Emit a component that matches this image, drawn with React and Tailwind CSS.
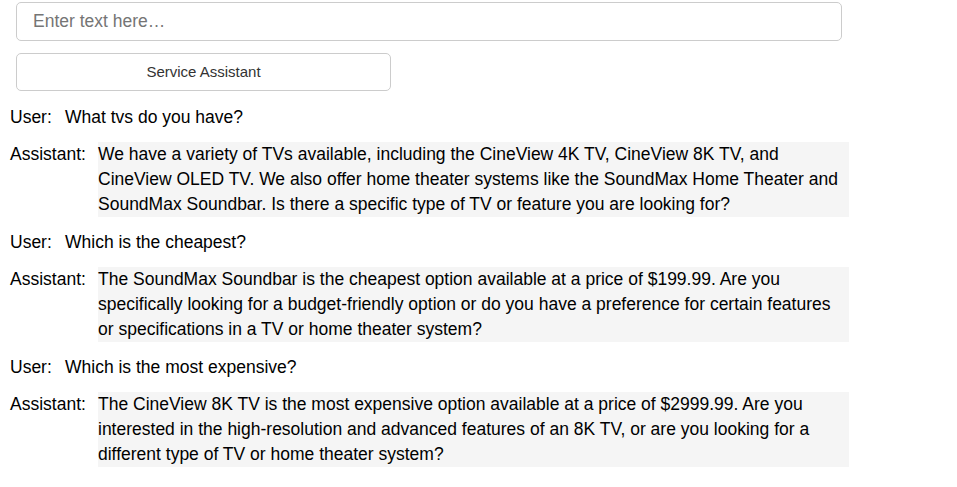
const messages = [
  { role: 'User', text: 'What tvs do you have?' },
  {
    role: 'Assistant',
    text: 'We have a variety of TVs available, including the CineView 4K TV, CineView 8K TV, and CineView OLED TV. We also offer home theater systems like the SoundMax Home Theater and SoundMax Soundbar. Is there a specific type of TV or feature you are looking for?',
  },
  { role: 'User', text: 'Which is the cheapest?' },
  {
    role: 'Assistant',
    text: 'The SoundMax Soundbar is the cheapest option available at a price of $199.99. Are you specifically looking for a budget-friendly option or do you have a preference for certain features or specifications in a TV or home theater system?',
  },
  { role: 'User', text: 'Which is the most expensive?' },
  {
    role: 'Assistant',
    text: 'The CineView 8K TV is the most expensive option available at a price of $2999.99. Are you interested in the high-resolution and advanced features of an 8K TV, or are you looking for a different type of TV or home theater system?',
  },
];

const App = () => {
  return (
    <div className="min-h-screen bg-white text-black font-['Liberation_Sans',Arial,sans-serif]">
      {/* Input + button */}
      <div className="pt-[2px] px-4 flex flex-col gap-3">
        <input
          type="text"
          placeholder="Enter text here…"
          className="w-[826px] h-[39px] px-4 text-[17.5px] border border-[#cccccc] rounded-[5px] placeholder:text-[#757575] outline-none"
        />
        <button className="w-[375px] h-[38px] text-[15px] text-[#333333] bg-white border border-[#cccccc] rounded-[5px]">
          Service Assistant
        </button>
      </div>

      {/* Conversation */}
      <div className="pl-[10px] pt-[13.5px] flex flex-col gap-[12.5px] text-[17.5px] leading-[25px]">
        {messages.map((m, i) =>
          m.role === 'User' ? (
            <div key={i} className="flex">
              <span className="w-[55px] shrink-0">User:</span>
              <span>{m.text}</span>
            </div>
          ) : (
            <div key={i} className="flex">
              <span className="w-[88px] shrink-0">Assistant:</span>
              <div className="w-[751px] bg-[#f5f5f5]">{m.text}</div>
            </div>
          )
        )}
      </div>
    </div>
  );
};

export default App;
